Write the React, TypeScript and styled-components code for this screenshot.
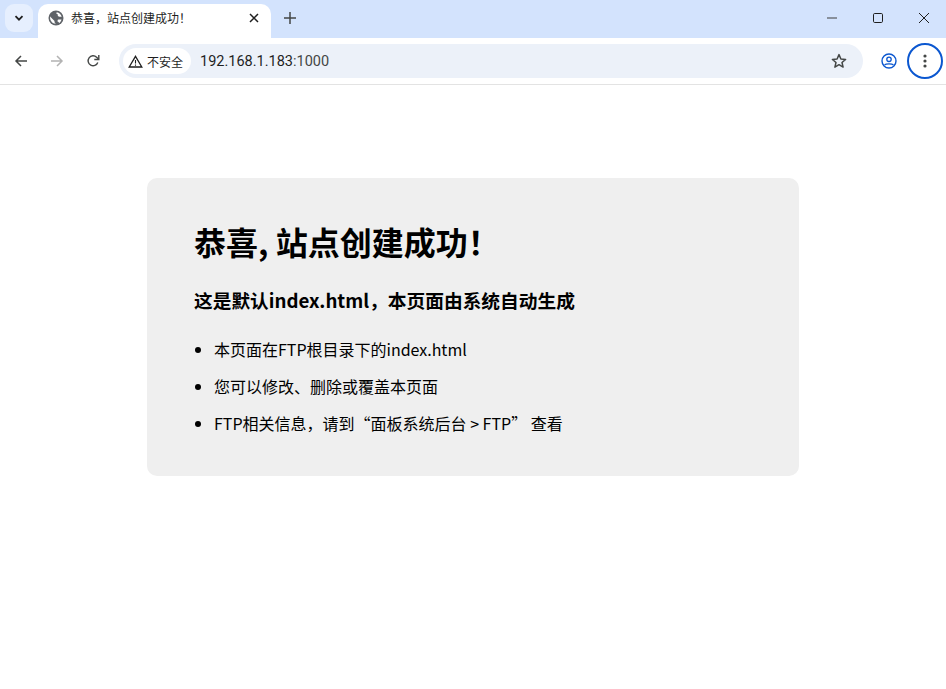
import { createGlobalStyle, styled } from 'styled-components';

const GlobalStyle = createGlobalStyle`
  html, body {
    margin: 0;
    padding: 0;
    height: 100%;
    background: #ffffff;
    font-family: 'Noto Sans CJK SC', sans-serif;
  }
  #root {
    height: 100%;
  }
`;

const App = () => {
  return (
    <Window>
      <GlobalStyle />
      <TabStrip>
        <TabSearch>
          <svg width="12" height="12" viewBox="0 0 12 12">
            <path d="M2.500 4.200 6 7.700l3.500-3.500" fill="none" stroke="#1f1f1f" strokeWidth="1.800" />
          </svg>
        </TabSearch>
        <Tab>
          <svg width="16" height="16" viewBox="0 0 16 16">
            <circle cx="8" cy="8" r="7.500" fill="#5f6368" />
            <path d="M8.800 2.200c2.400.4 4.300 2.200 4.900 4.500h-2.200c-1 0-1.800-.6-1.800-1.600V4.300L8.200 3.500z" fill="#ffffff" />
            <path d="M2.300 6.800 6.500 11v.8c0 .8.500 1.200 1 1.400v.6c-2.900-.2-5.300-2.600-5.400-5.700 0-.8 0-1.600.2-2.300z" fill="#ffffff" />
            <path d="M10.500 9.500h3c-.3 1.500-1.200 2.800-2.400 3.600-.2-.8-.8-1.300-1.500-1.300V10.500c0-.6.300-1 .9-1z" fill="#ffffff" />
          </svg>
          <TabTitle>恭喜，站点创建成功！</TabTitle>
          <svg width="12" height="12" viewBox="0 0 12 12">
            <path d="M2 2l8 8M10 2l-8 8" stroke="#1f1f1f" strokeWidth="1.500" />
          </svg>
        </Tab>
        <NewTab>
          <svg width="12" height="12" viewBox="0 0 12 12">
            <path d="M6 0v12M0 6h12" stroke="#444746" strokeWidth="1.500" />
          </svg>
        </NewTab>
        <WindowControls>
          <WindowButton>
            <svg width="12" height="12" viewBox="0 0 12 12">
              <path d="M1 6h10" stroke="#5f6368" strokeWidth="1.300" />
            </svg>
          </WindowButton>
          <WindowButton>
            <svg width="12" height="12" viewBox="0 0 12 12">
              <rect x="1.500" y="1.500" width="9" height="9" rx="1.200" fill="none" stroke="#1f1f1f" strokeWidth="1" />
            </svg>
          </WindowButton>
          <WindowButton>
            <svg width="12" height="12" viewBox="0 0 12 12">
              <path d="M1 1l10 10M11 1 1 11" stroke="#1f1f1f" strokeWidth="1" />
            </svg>
          </WindowButton>
        </WindowControls>
      </TabStrip>
      <Toolbar>
        <NavButton>
          <svg width="14" height="14" viewBox="0 0 14 14">
            <path d="M13 7H2M7 2 2 7l5 5" fill="none" stroke="#444746" strokeWidth="1.500" />
          </svg>
        </NavButton>
        <NavButton>
          <svg width="14" height="14" viewBox="0 0 14 14">
            <path d="M1 7h11M7 2l5 5-5 5" fill="none" stroke="#b3b3b3" strokeWidth="1.500" />
          </svg>
        </NavButton>
        <NavButton>
          <svg width="14" height="14" viewBox="0 0 14 14">
            <path d="M11.800 8.500A5 5 0 1 1 10.600 3.200L12.500 5" fill="none" stroke="#444746" strokeWidth="1.400" />
            <path d="M12.800 1v4.500H8.300" fill="none" stroke="#444746" strokeWidth="1.400" />
          </svg>
        </NavButton>
        <Omnibox>
          <SecurityChip>
            <svg width="15" height="13" viewBox="0 0 15 13">
              <path d="M7.500 1.300 13.800 12H1.200z" fill="none" stroke="#1f1f1f" strokeWidth="1.300" />
              <path d="M7.500 5v3.500M7.500 9.500v1.200" stroke="#1f1f1f" strokeWidth="1.100" />
            </svg>
            不安全
          </SecurityChip>
          <Url>
            192.168.1.183<UrlPort>:1000</UrlPort>
          </Url>
          <StarIcon viewBox="0 0 16 16" width="16" height="16">
            <path d="M8 1.600 9.900 6l4.700.4-3.600 3.100 1.100 4.600L8 11.700l-4.100 2.400L5 9.500 1.400 6.400 6.100 6z" fill="none" stroke="#444746" strokeWidth="1.500" strokeLinejoin="round" />
          </StarIcon>
        </Omnibox>
        <ProfileIcon viewBox="0 0 16 16" width="16" height="16">
          <circle cx="8" cy="8" r="7" fill="none" stroke="#0b57d0" strokeWidth="1.400" />
          <circle cx="8" cy="6.300" r="2.200" fill="none" stroke="#0b57d0" strokeWidth="1.300" />
          <path d="M3.500 12c1.500-1.400 7.500-1.400 9 0" fill="none" stroke="#0b57d0" strokeWidth="1.300" />
        </ProfileIcon>
        <MenuButton>
          <svg width="4" height="14" viewBox="0 0 4 14">
            <circle cx="2" cy="2" r="1.600" fill="#444746" />
            <circle cx="2" cy="7" r="1.600" fill="#444746" />
            <circle cx="2" cy="12" r="1.600" fill="#444746" />
          </svg>
        </MenuButton>
      </Toolbar>
      <Page>
        <Card>
          <Title>恭喜, 站点创建成功！</Title>
          <Subtitle>这是默认index.html，本页面由系统自动生成</Subtitle>
          <List>
            <Item>本页面在FTP根目录下的index.html</Item>
            <Item>您可以修改、删除或覆盖本页面</Item>
            <Item>FTP相关信息，请到“面板系统后台 &gt; FTP” 查看</Item>
          </List>
        </Card>
      </Page>
    </Window>
  );
};

export default App;

const Window = styled.div`
  display: flex;
  flex-direction: column;
  height: 100%;
  overflow: hidden;
`;

const TabStrip = styled.div`
  display: flex;
  align-items: center;
  flex: none;
  height: 38px;
  padding: 0 0 2px 5px;
  box-sizing: border-box;

  background-color: #d3e3fd;
`;

const TabSearch = styled.div`
  display: flex;
  justify-content: center;
  align-items: center;
  width: 28px;
  height: 28px;

  border-radius: 9px;
  background-color: #e6effe;
`;

const Tab = styled.div`
  display: flex;
  align-items: center;
  align-self: flex-end;
  width: 233px;
  height: 34px;
  margin: 0 0 -2px 5px;
  padding: 0 11px 6px 10px;
  box-sizing: border-box;

  border-radius: 10px 10px 0 0;
  background-color: #ffffff;
`;

const TabTitle = styled.span`
  flex: 1;
  margin-left: 7px;

  color: #1f1f1f;
  font-size: 12px;
  line-height: 16px;
`;

const NewTab = styled.div`
  display: flex;
  justify-content: center;
  align-items: center;
  width: 28px;
  height: 28px;
  margin-left: 5px;
`;

const WindowControls = styled.div`
  display: flex;
  margin: 0 -1px 0 auto;
`;

const WindowButton = styled.div`
  display: flex;
  justify-content: center;
  align-items: center;
  width: 46px;
  height: 36px;
`;

const Toolbar = styled.div`
  display: flex;
  align-items: center;
  flex: none;
  height: 47px;
  padding-left: 7px;
  box-sizing: border-box;

  border-bottom: 1px solid #e3e3e3;
  background-color: #ffffff;
`;

const NavButton = styled.div`
  display: flex;
  justify-content: center;
  align-items: center;
  width: 28px;
  height: 28px;
  margin-right: 8px;
`;

const Omnibox = styled.div`
  display: flex;
  align-items: center;
  width: 744px;
  height: 34px;
  margin-left: 4px;
  padding: 0 16px 0 4px;
  box-sizing: border-box;

  border-radius: 17px;
  background-color: #ecf1f9;
`;

const SecurityChip = styled.div`
  display: flex;
  align-items: center;
  gap: 4px;
  height: 26px;
  padding: 0 8px 0 5px;

  border-radius: 13px;
  background-color: #ffffff;
  color: #1f1f1f;
  font-size: 12px;
`;

const Url = styled.span`
  margin-left: 9px;

  color: #1f1f1f;
  font-family: 'Roboto', sans-serif;
  font-size: 14.5px;
`;

const UrlPort = styled.span`
  color: #444746;
`;

const StarIcon = styled.svg`
  margin-left: auto;
`;

const ProfileIcon = styled.svg`
  margin-left: 18px;
`;

const MenuButton = styled.div`
  display: flex;
  justify-content: center;
  align-items: center;
  width: 32px;
  height: 32px;
  margin-left: 10px;

  border: 2px solid #0b57d0;
  border-radius: 50%;
`;

const Page = styled.div`
  flex: 1;
  padding-top: 93px;
  background-color: #ffffff;
`;

const Card = styled.div`
  width: 652px;
  height: 298px;
  margin: 0 auto;
  padding: 39px 47px 0;
  box-sizing: border-box;

  border-radius: 10px;
  background-color: #efefef;
  color: #000000;
`;

const Title = styled.h1`
  margin: 0;

  font-size: 32px;
  font-weight: 700;
  line-height: 48px;
`;

const Subtitle = styled.h3`
  margin: 21px 0 0;

  font-size: 18.72px;
  font-weight: 700;
  line-height: 27px;
`;

const List = styled.ul`
  margin: 24px 0 0;
  padding-left: 20px;
`;

const Item = styled.li`
  margin-bottom: 13px;

  font-size: 16px;
  line-height: 24px;
`;
